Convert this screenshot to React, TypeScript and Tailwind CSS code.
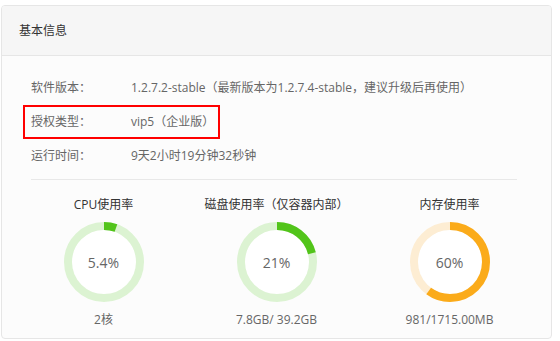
import React from "react";

const rows = [
  { label: "软件版本：", value: "1.2.7.2-stable（最新版本为1.2.7.4-stable，建议升级后再使用）", mark: false },
  { label: "授权类型：", value: "vip5（企业版）", mark: true },
  { label: "运行时间：", value: "9天2小时19分钟32秒钟", mark: false },
];

const charts = [
  { title: "CPU使用率", pct: 5.4, text: "5.4%", foot: "2核", color: "#52c41a", track: "#dcf3d2" },
  { title: "磁盘使用率（仅容器内部）", pct: 21, text: "21%", foot: "7.8GB/ 39.2GB", color: "#52c41a", track: "#dcf3d2" },
  { title: "内存使用率", pct: 60, text: "60%", foot: "981/1715.00MB", color: "#fbab1a", track: "#fdedd3" },
];

const Ring = ({ pct, color, track, text }: { pct: number; color: string; track: string; text: string }) => {
  const r = 36;
  const c = 2 * Math.PI * r;
  return (
    <div className="relative h-20 w-20">
      <svg width="80" height="80" viewBox="0 0 80 80" className="block">
        <circle cx="40" cy="40" r="32" fill="#fff" />
        <circle cx="40" cy="40" r={r} fill="none" stroke={track} strokeWidth="8" />
        <circle
          cx="40"
          cy="40"
          r={r}
          fill="none"
          stroke={color}
          strokeWidth="8"
          strokeDasharray={`${(c * pct) / 100} ${c}`}
          transform="rotate(-90 40 40)"
        />
      </svg>
      <div className="absolute inset-0 flex items-center justify-center text-[14px] text-[#666]">{text}</div>
    </div>
  );
};

export default function App() {
  return (
    <div
      className="h-[341px] w-[560px] bg-white pl-px pt-[5px]"
      style={{ fontFamily: '"Open Sans", "Noto Sans CJK SC", sans-serif' }}
    >
      <div className="w-[551px] overflow-hidden rounded-[4px] border border-[#e6e6e6] bg-[#fcfcfc]">
        <div className="flex h-[50px] items-center border-b border-[#e6e6e6] bg-[#f6f6f6] pl-[17px] text-[12px] text-[#333]">
          基本信息
        </div>
        <div className="px-[15px] pt-[15px] pb-[9px]">
          <div>
            {rows.map((r) => (
              <div
                key={r.label}
                className={`ml-[6px] flex h-[34px] items-center border-2 pl-[6px] text-[12px] text-[#666] ${
                  r.mark ? "w-[197px] border-[#ff0000]" : "border-transparent"
                }`}
              >
                <span className="w-[100px] shrink-0">{r.label}</span>
                <span>{r.value}</span>
              </div>
            ))}
          </div>
          <div className="mt-[6px] ml-[14px] h-px w-[486px] bg-[#e8e8e8]" />
          <div className="mt-[16px] grid grid-cols-3">
            {charts.map((c) => (
              <div key={c.title} className="flex flex-col items-center">
                <div className="h-[18px] text-[12px] leading-[18px] text-[#333]">{c.title}</div>
                <div className="mt-[8px]">
                  <Ring pct={c.pct} color={c.color} track={c.track} text={c.text} />
                </div>
                <div className="mt-[9px] h-[18px] text-[12px] leading-[18px] text-[#666]">{c.foot}</div>
              </div>
            ))}
          </div>
        </div>
      </div>
    </div>
  );
}
